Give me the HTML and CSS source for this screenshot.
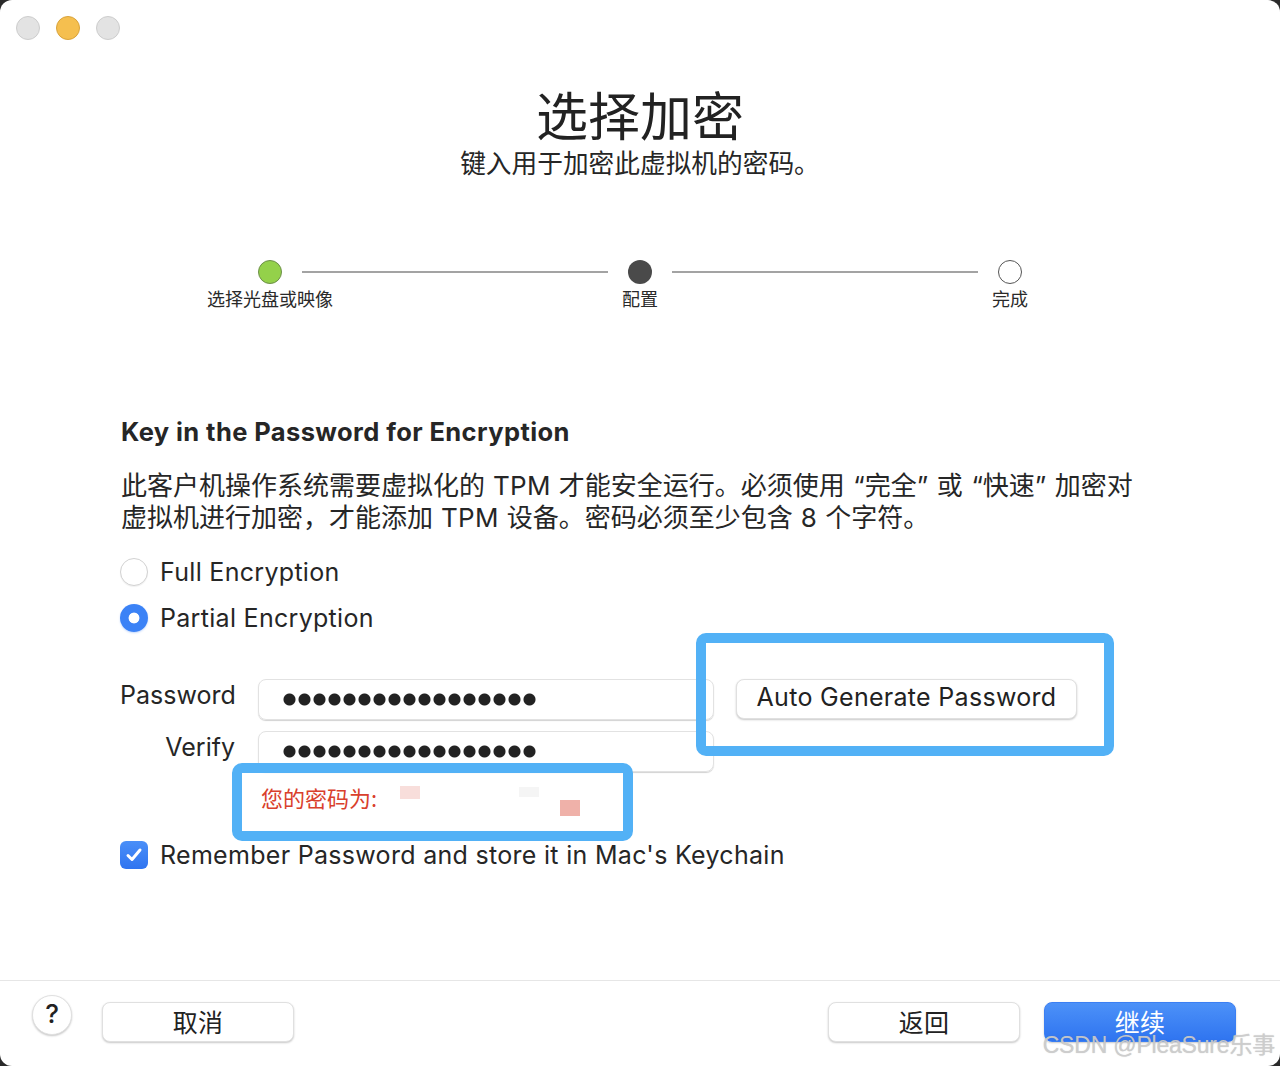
FILE: index.html
```html
<!DOCTYPE html>
<html lang="zh-CN">
<head>
	<meta charset="UTF-8">
	<title>选择加密</title>
	<link rel="stylesheet" href="styles.css">
</head>
<body>
	<div class="window">
		<div class="titlebar">
			<span class="light light-grey"></span>
			<span class="light light-yellow"></span>
			<span class="light light-grey"></span>
		</div>

		<div class="hero">
			<h1 class="title">选择加密</h1>
			<p class="subtitle">键入用于加密此虚拟机的密码。</p>
		</div>

		<div class="steps">
			<div class="step">
				<span class="dot dot-done"></span>
				<span class="step-label">选择光盘或映像</span>
			</div>
			<span class="step-line"></span>
			<div class="step">
				<span class="dot dot-current"></span>
				<span class="step-label">配置</span>
			</div>
			<span class="step-line"></span>
			<div class="step">
				<span class="dot dot-todo"></span>
				<span class="step-label">完成</span>
			</div>
		</div>

		<div class="content">
			<h2 class="heading">Key in the Password for Encryption</h2>
			<p class="desc">此客户机操作系统需要虚拟化的<span class="latin">TPM</span>才能安全运行。必须使用<span class="q q-open">“</span>完全<span class="q q-close">”</span>或<span class="q q-open">“</span>快速<span class="q q-close">”</span>加密对<br>虚拟机进行加密，才能添加<span class="latin">TPM</span>设备。密码必须至少包含<span class="latin">8</span>个字符。</p>

			<div class="radios">
				<label class="radio-row"><span class="radio"></span>Full Encryption</label>
				<label class="radio-row"><span class="radio radio-on"></span>Partial Encryption</label>
			</div>

			<div class="form">
				<span class="field-label">Password</span>
				<div class="input"><span class="dots"></span></div>
				<button class="btn btn-auto">Auto Generate Password</button>

				<span class="field-label">Verify</span>
				<div class="input"><span class="dots"></span></div>
				<span></span>

				<!-- annotation boxes drawn over the dialog -->
				<span class="mark mark-auto"></span>
				<span class="mark mark-pass"></span>
			</div>

			<div class="hint">
				您的密码为:
				<span class="blur blur-a"></span>
				<span class="blur blur-b"></span>
				<span class="blur blur-c"></span>
			</div>

			<label class="check-row">
				<span class="check">
					<svg width="20" height="20" viewBox="0 0 20 20"><path d="M4 10.5 L8 14.5 L16 5" fill="none" stroke="#fff" stroke-width="3" stroke-linecap="round" stroke-linejoin="round"/></svg>
				</span>
				Remember Password and store it in Mac's Keychain
			</label>
		</div>

		<div class="footer">
			<button class="help">?</button>
			<button class="btn btn-foot">取消</button>
			<span class="spacer"></span>
			<button class="btn btn-foot">返回</button>
			<button class="btn btn-foot btn-primary">继续</button>
		</div>

		<span class="watermark">CSDN @PleaSure乐事</span>
	</div>
</body>
</html>
```

FILE: styles.css
```css
html, body
{
	margin: 0;
	padding: 0;
}

body
{
	background: #2a2a2a;
	font-family: "Inter", "Noto Sans CJK SC", sans-serif;
	color: #262626;
	text-spacing-trim: space-all;
}

.window
{
	position: relative;
	height: 1066px;
	background: #fff;
	border-radius: 12px;
	display: flex;
	flex-direction: column;
	overflow: hidden;
}

.titlebar
{
	height: 56px;
	box-sizing: border-box;
	padding: 16px 0 0 16px;
	display: flex;
	gap: 16px;
}

.light
{
	width: 24px;
	height: 24px;
	border-radius: 50%;
	box-sizing: border-box;
}

.light-grey
{
	background: #e3e3e3;
	border: 1px solid #cdcdcd;
}

.light-yellow
{
	background: #f5bf4f;
	border: 1px solid #d9a33b;
}

.hero
{
	text-align: center;
	font-family: "Noto Sans CJK SC", sans-serif;
}

.title
{
	margin: 28px 0 0;
	font-size: 52px;
	line-height: 60px;
	font-weight: 400;
	color: #222;
}

.subtitle
{
	margin: 2px 0 0;
	font-size: 25.7px;
	line-height: 32px;
	color: #262626;
}

.steps
{
	margin: 82px 0 0 258px;
	width: 764px;
	display: flex;
	align-items: flex-start;
	font-family: "Noto Sans CJK SC", sans-serif;
}

.step
{
	width: 24px;
	display: flex;
	flex-direction: column;
	align-items: center;
}

.dot
{
	width: 24px;
	height: 24px;
	border-radius: 50%;
	box-sizing: border-box;
}

.dot-done
{
	background: #94d14a;
	border: 1px solid #6d8f4a;
}

.dot-current
{
	background: #4a4a4a;
}

.dot-todo
{
	background: #fff;
	border: 1px solid #555;
}

.step-label
{
	margin-top: 3px;
	font-size: 18px;
	line-height: 22px;
	white-space: nowrap;
	color: #2a2a2a;
}

.step-line
{
	flex: 1;
	height: 2px;
	margin: 11px 20px 0;
	background: #a3a3a3;
}

.content
{
	padding-left: 121px;
}

.heading
{
	margin: 108px 0 0;
	font-size: 25.5px;
	letter-spacing: 0.4px;
	line-height: 30px;
	font-weight: 700;
	color: #262626;
}

.desc
{
	margin: 21px 0 0;
	font-family: "Noto Sans CJK SC", sans-serif;
	font-size: 26px;
	line-height: 32px;
	color: #262626;
}

.latin
{
	font-family: "Inter", sans-serif;
	font-size: 26px;
	letter-spacing: 0.3px;
	line-height: 1;
	margin: 0 8px;
}

.q
{
	display: inline-block;
	width: 20px;
	font-family: "Inter", sans-serif;
	line-height: 1;
}

.q-open
{
	text-align: right;
}

.q-close
{
	text-align: left;
}

.radios
{
	margin-top: 17px;
	display: flex;
	flex-direction: column;
}

.radio-row
{
	height: 46px;
	display: flex;
	align-items: center;
	gap: 12px;
	font-size: 25px;
	letter-spacing: 0.3px;
	margin-left: -1px;
}

.radio
{
	width: 28px;
	height: 28px;
	border-radius: 50%;
	box-sizing: border-box;
	background: #fff;
	border: 1px solid #d2d2d2;
	box-shadow: 0 1px 1px rgba(0, 0, 0, 0.06);
}

.radio-on
{
	background: radial-gradient(circle, #fff 0 5px, #3b82f6 5.8px);
	border: none;
	box-shadow: 0 1px 2px rgba(59, 130, 246, 0.3);
}

.form
{
	position: relative;
	margin: 38px 0 0 -1px;
	display: grid;
	grid-template-columns: 115px 456px 340px;
	column-gap: 23px;
	row-gap: 11px;
	align-items: center;
	width: 960px;
}

.field-label
{
	text-align: right;
	font-size: 25px;
	line-height: 41px;
	margin-top: -8px;
}

.input
{
	height: 41px;
	box-sizing: border-box;
	border: 1px solid #e2e2e2;
	border-radius: 8px;
	box-shadow: 0 1px 1px rgba(0, 0, 0, 0.18);
	display: flex;
	align-items: center;
	padding-left: 23px;
}

.dots
{
	width: 255px;
	height: 15px;
	background: radial-gradient(circle, #222 5.5px, transparent 6.5px) 0 0 / 15px 15px repeat-x;
}

.btn
{
	font-family: "Inter", "Noto Sans CJK SC", sans-serif;
	font-size: 25px;
	letter-spacing: 0.3px;
	color: #222;
	background: #fff;
	border: 1px solid #e0e0e0;
	border-radius: 8px;
	box-shadow: 0 1px 2px rgba(0, 0, 0, 0.22);
	padding: 0 0 3px;
	height: 40px;
}

.btn-auto
{
	margin: -2px 0 0 -1px;
}

.mark
{
	position: absolute;
	border: 10px solid #52b1f6;
	border-radius: 10px;
	box-sizing: border-box;
}

.mark-auto
{
	left: 576px;
	top: -46px;
	width: 418px;
	height: 123px;
}

.mark-pass
{
	left: 112px;
	top: 84px;
	width: 401px;
	height: 78px;
}

.hint
{
	position: relative;
	margin: 11px 0 0 140px;
	font-family: "Noto Sans CJK SC", sans-serif;
	font-size: 22px;
	line-height: 28px;
	color: #d9402c;
}

.blur
{
	position: absolute;
}

.blur-a
{
	left: 139px;
	top: 3px;
	width: 20px;
	height: 13px;
	background: #f8dedb;
}

.blur-b
{
	left: 258px;
	top: 4px;
	width: 20px;
	height: 10px;
	background: #f5f5f5;
}

.blur-c
{
	left: 299px;
	top: 17px;
	width: 20px;
	height: 16px;
	background: #efb1a9;
}

.check-row
{
	margin: 30px 0 0 -1px;
	display: flex;
	align-items: center;
	gap: 12px;
	font-size: 25px;
	letter-spacing: 0.3px;
	line-height: 28px;
}

.check
{
	width: 28px;
	height: 28px;
	border-radius: 6px;
	background: linear-gradient(#4a8ff8, #2f74f0);
	display: flex;
	align-items: center;
	justify-content: center;
}

.footer
{
	margin-top: auto;
	height: 86px;
	box-sizing: border-box;
	border-top: 1px solid #e6e6e6;
	padding: 21px 44px 0 32px;
	display: flex;
	align-items: flex-start;
}

.help
{
	width: 40px;
	height: 40px;
	margin-top: -7px;
	border-radius: 50%;
	background: #fff;
	border: 1px solid #e0e0e0;
	box-shadow: 0 1px 2px rgba(0, 0, 0, 0.22);
	font-family: "Inter", sans-serif;
	font-size: 26px;
	font-weight: 500;
	color: #222;
	padding: 0 0 3px;
}

.btn-foot
{
	width: 192px;
	margin-left: 30px;
	font-family: "Noto Sans CJK SC", sans-serif;
	padding-bottom: 5px;
}

.spacer
{
	flex: 1;
}

.btn-primary
{
	margin-left: 24px;
	background: linear-gradient(#4c91f8, #2f74f0);
	border-color: #3b7ff3;
	color: #fff;
}

.watermark
{
	position: absolute;
	right: 5px;
	bottom: 6px;
	font-family: "Liberation Sans", "Noto Sans CJK SC", sans-serif;
	font-size: 23px;
	letter-spacing: -0.2px;
	color: rgba(205, 205, 205, 0.92);
	text-shadow: 0 0 1px rgba(120, 120, 120, 0.4);
}
```
